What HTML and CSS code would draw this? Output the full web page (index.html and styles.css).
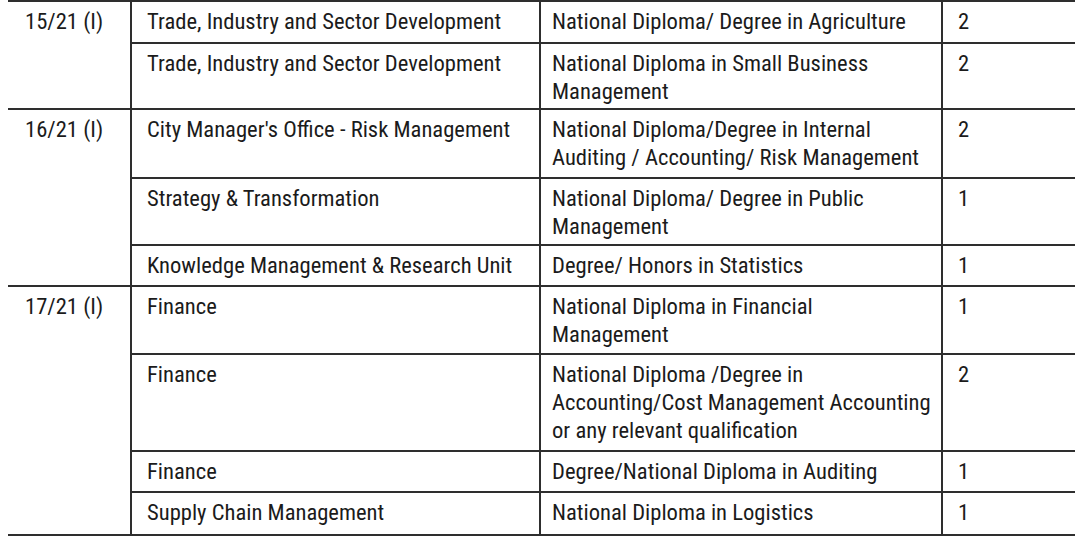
FILE: index.html
```html
<!DOCTYPE html>
<html>
<head>
<meta charset="utf-8">
<link rel="stylesheet" href="styles.css">
</head>
<body>
<table class="posts">
  <colgroup>
    <col class="c-ref"><col class="c-dept"><col class="c-qual"><col class="c-num">
  </colgroup>
  <tbody>
    <tr class="r1">
      <td class="ref" rowspan="2">15/21 (I)</td>
      <td class="dept">Trade, Industry and Sector Development</td>
      <td class="qual">National Diploma/ Degree in Agriculture</td>
      <td class="num">2</td>
    </tr>
    <tr class="r2">
      <td class="dept">Trade, Industry and Sector Development</td>
      <td class="qual">National Diploma in Small Business Management</td>
      <td class="num">2</td>
    </tr>
    <tr class="r3">
      <td class="ref" rowspan="3">16/21 (I)</td>
      <td class="dept">City Manager's Office - Risk Management</td>
      <td class="qual">National Diploma/Degree in Internal Auditing / Accounting/ Risk Management</td>
      <td class="num">2</td>
    </tr>
    <tr class="r4">
      <td class="dept">Strategy &amp; Transformation</td>
      <td class="qual">National Diploma/ Degree in Public Management</td>
      <td class="num">1</td>
    </tr>
    <tr class="r5">
      <td class="dept">Knowledge Management &amp; Research Unit</td>
      <td class="qual">Degree/ Honors in Statistics</td>
      <td class="num">1</td>
    </tr>
    <tr class="r6">
      <td class="ref" rowspan="4">17/21 (I)</td>
      <td class="dept">Finance</td>
      <td class="qual">National Diploma in Financial<br>Management</td>
      <td class="num">1</td>
    </tr>
    <tr class="r7">
      <td class="dept">Finance</td>
      <td class="qual">National Diploma /Degree in Accounting/Cost Management Accounting or any relevant qualification</td>
      <td class="num">2</td>
    </tr>
    <tr class="r8">
      <td class="dept">Finance</td>
      <td class="qual">Degree/National Diploma in Auditing</td>
      <td class="num">1</td>
    </tr>
    <tr class="r9">
      <td class="dept">Supply Chain Management</td>
      <td class="qual">National Diploma in Logistics</td>
      <td class="num">1</td>
    </tr>
  </tbody>
</table>
</body>
</html>
```

FILE: styles.css
```css
html, body {
  margin: 0;
  padding: 0;
  background: #ffffff;
}
body {
  font-family: "Roboto Condensed", "Arial Narrow", "Open Sans", sans-serif;
  font-stretch: 75%;
  font-size: 22.6px;
  line-height: 28px;
  color: #1b1b1b;
}
.posts {
  margin-left: 8px;
  width: 1067px;
  border-collapse: collapse;
  table-layout: fixed;
}
.c-ref { width: 123px; }
.c-dept { width: 409px; }
.c-qual { width: 402px; }
.c-num { width: 133px; }

.posts td {
  vertical-align: top;
  padding: 6px 8px 0 15px;
  border: 2px solid #2e2e2e;
  box-sizing: border-box;
}
.posts td:first-child { border-left: none; }
.posts td.num { border-right: none; }
.posts td.ref { padding-left: 17px; border-left: none; }
.posts td.qual { padding-left: 11px; padding-right: 6px; }
.posts td.num { padding-left: 15px; }

.r1 { height: 42px; }
.r2 { height: 66px; }
.r3 { height: 69px; }
.r4 { height: 67px; }
.r5 { height: 41px; }
.r6 { height: 68px; }
.r7 { height: 97px; }
.r8 { height: 41px; }
.r9 { height: 43px; }
```
